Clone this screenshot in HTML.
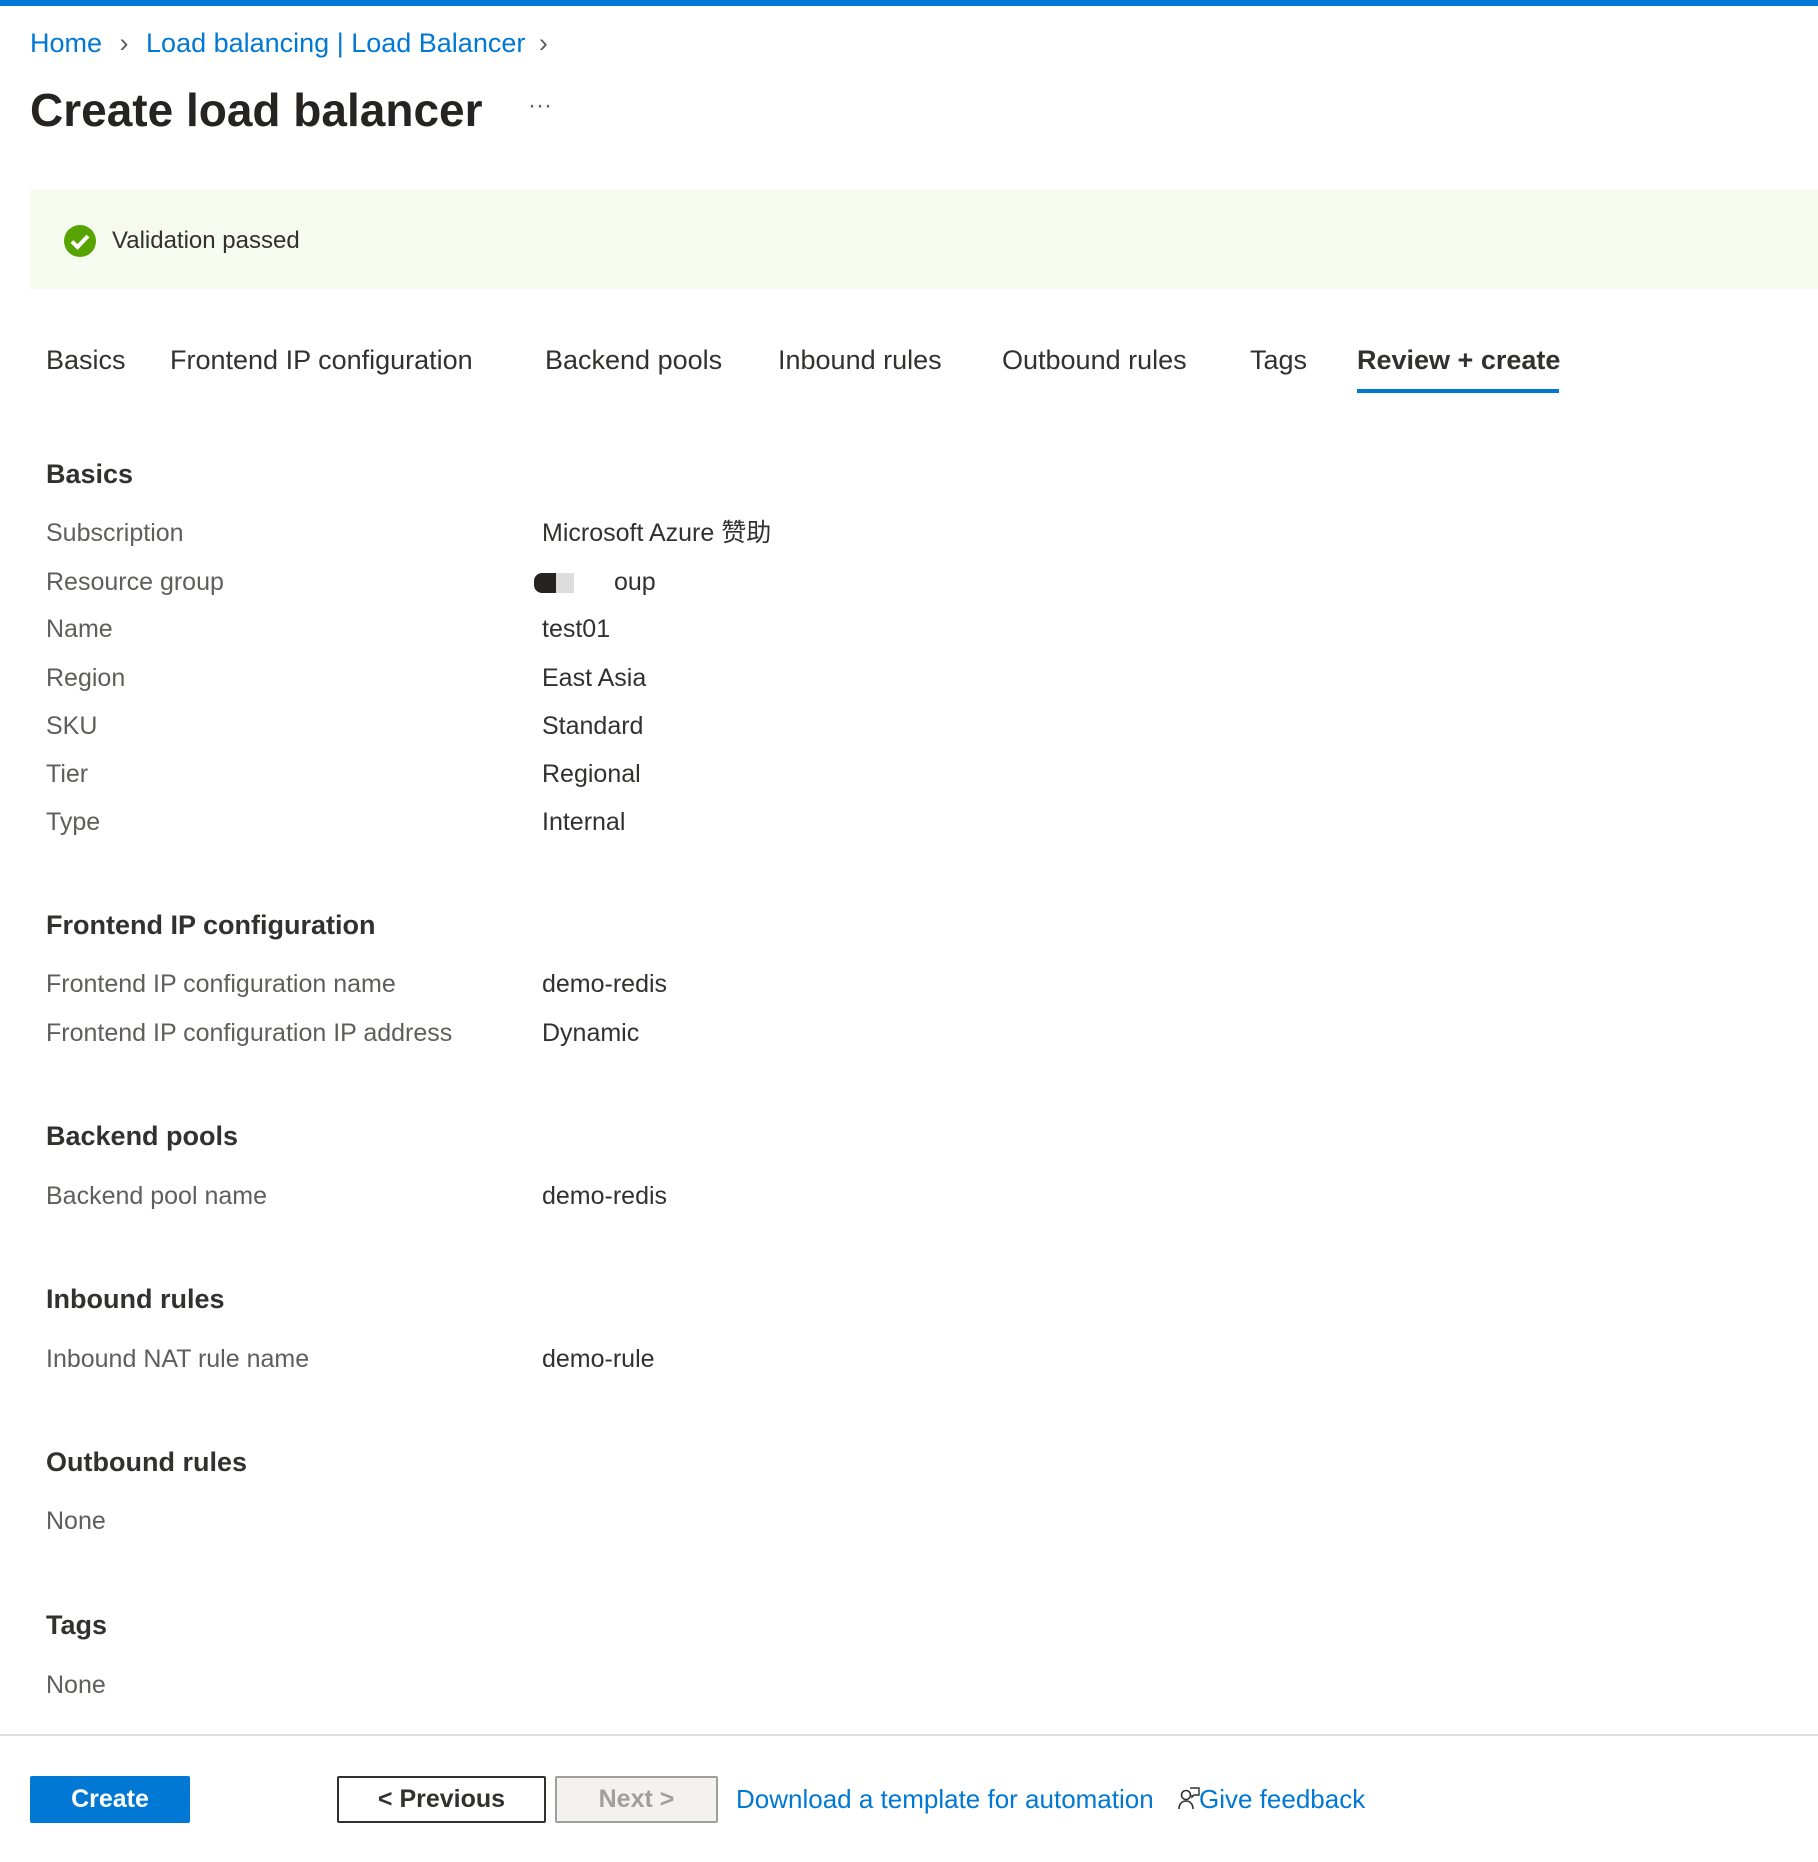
<!DOCTYPE html>
<html><head><meta charset="utf-8"><style>
*{margin:0;padding:0;box-sizing:border-box}
body{width:1818px;height:1862px;background:#fff;font-family:"Liberation Sans","Noto Sans CJK SC",sans-serif;color:#323130;position:relative;overflow:hidden}
.a{position:absolute;white-space:nowrap}
.t{height:40px;line-height:40px}
.lab{font-size:25px;color:#605e5c;left:46px}
.val{font-size:25px;color:#323130;left:542px}
.h{font-size:27px;font-weight:bold;color:#323130;left:46px}
.tab{font-size:27px;color:#323130}
</style></head><body>
<div class="a" style="left:0;top:0;width:1818px;height:6px;background:#0078d4"></div>
<div class="a t" style="left:30px;top:23px;font-size:27px;color:#0078d4">Home <span style="color:#605e5c;margin:0 10px">&#x203A;</span> Load balancing | Load Balancer <span style="color:#605e5c;margin-left:6px">&#x203A;</span></div>
<div class="a" style="left:30px;top:80px;height:60px;line-height:60px;font-size:46px;font-weight:bold;color:#252423">Create load balancer</div>
<div class="a" style="left:528px;top:92px;font-size:24px;color:#605e5c">&middot;&middot;&middot;</div>
<div class="a" style="left:30px;top:190px;width:1788px;height:99px;background:#f5fbef"></div>
<svg class="a" style="left:63px;top:224px" width="34" height="34" viewBox="0 0 34 34"><circle cx="17" cy="17" r="16" fill="#57a300"/><path d="M9 17.5l5.5 5.5L25 12" stroke="#fff" stroke-width="4" fill="none"/></svg>
<div class="a t" style="left:112px;top:221px;font-size:24px;color:#323130">Validation passed</div>

<div class="a t tab" style="left:46px;top:340px">Basics</div>
<div class="a t tab" style="left:170px;top:340px">Frontend IP configuration</div>
<div class="a t tab" style="left:545px;top:340px">Backend pools</div>
<div class="a t tab" style="left:778px;top:340px">Inbound rules</div>
<div class="a t tab" style="left:1002px;top:340px">Outbound rules</div>
<div class="a t tab" style="left:1250px;top:340px">Tags</div>
<div class="a t tab" style="left:1357px;top:340px;font-weight:bold">Review + create</div>
<div class="a" style="left:1357px;top:389px;width:202px;height:4px;background:#0078d4"></div>

<div class="a t h" style="top:454px">Basics</div>
<div class="a t lab" style="top:513px">Subscription</div><div class="a t val" style="top:513px">Microsoft Azure 赞助</div>
<div class="a t lab" style="top:562px">Resource group</div><div class="a t val" style="top:562px;left:534px"><span style="display:inline-block;width:22px;height:20px;background:#252423;border-radius:8px 0 0 8px;vertical-align:middle"></span><span style="display:inline-block;width:18px;height:20px;background:#ddd;vertical-align:middle"></span><span style="display:inline-block;width:40px"></span>oup</div>
<div class="a t lab" style="top:609px">Name</div><div class="a t val" style="top:609px">test01</div>
<div class="a t lab" style="top:658px">Region</div><div class="a t val" style="top:658px">East Asia</div>
<div class="a t lab" style="top:706px">SKU</div><div class="a t val" style="top:706px">Standard</div>
<div class="a t lab" style="top:754px">Tier</div><div class="a t val" style="top:754px">Regional</div>
<div class="a t lab" style="top:802px">Type</div><div class="a t val" style="top:802px">Internal</div>

<div class="a t h" style="top:905px">Frontend IP configuration</div>
<div class="a t lab" style="top:964px">Frontend IP configuration name</div><div class="a t val" style="top:964px">demo-redis</div>
<div class="a t lab" style="top:1013px">Frontend IP configuration IP address</div><div class="a t val" style="top:1013px">Dynamic</div>

<div class="a t h" style="top:1116px">Backend pools</div>
<div class="a t lab" style="top:1176px">Backend pool name</div><div class="a t val" style="top:1176px">demo-redis</div>

<div class="a t h" style="top:1279px">Inbound rules</div>
<div class="a t lab" style="top:1339px">Inbound NAT rule name</div><div class="a t val" style="top:1339px">demo-rule</div>

<div class="a t h" style="top:1442px">Outbound rules</div>
<div class="a t lab" style="top:1501px">None</div>

<div class="a t h" style="top:1605px">Tags</div>
<div class="a t lab" style="top:1665px">None</div>

<div class="a" style="left:0;top:1734px;width:1818px;height:2px;background:#e1dfdd"></div>
<div class="a" style="left:30px;top:1776px;width:160px;height:47px;background:#0078d4;border-radius:2px;color:#fff;font-size:25px;font-weight:bold;text-align:center;line-height:47px">Create</div>
<div class="a" style="left:337px;top:1776px;width:209px;height:47px;border:2px solid #323130;border-radius:2px;color:#323130;font-size:25px;font-weight:bold;text-align:center;line-height:43px">&lt; Previous</div>
<div class="a" style="left:555px;top:1776px;width:163px;height:47px;border:2px solid #a19f9d;background:#f3f2f1;border-radius:2px;color:#a19f9d;font-size:25px;font-weight:bold;text-align:center;line-height:43px">Next &gt;</div>
<div class="a t" style="left:736px;top:1779px;font-size:26px;color:#0078d4">Download a template for automation</div>
<svg class="a" style="left:1178px;top:1787px" width="22" height="24" viewBox="0 0 22 24"><circle cx="8" cy="8" r="4.5" fill="none" stroke="#323130" stroke-width="1.6"/><path d="M1 22c0-5 3-8 7-8s7 3 7 8" fill="none" stroke="#323130" stroke-width="1.6"/><path d="M12 1h9v7h-5l-2 2V8" fill="none" stroke="#323130" stroke-width="1.4"/></svg>
<div class="a t" style="left:1199px;top:1779px;font-size:26px;color:#0078d4">Give feedback</div>
</body></html>
